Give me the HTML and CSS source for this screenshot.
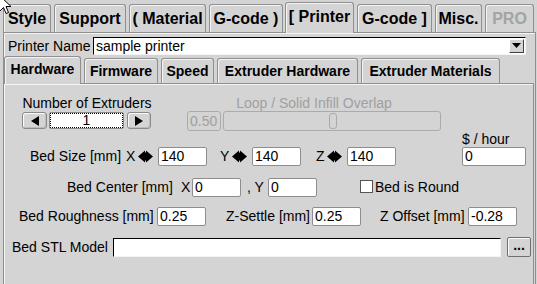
FILE: index.html
```html
<!DOCTYPE html>
<html lang="en">
<head>
    <meta charset="UTF-8">
    <title>Printer settings</title>
    <link rel="stylesheet" href="styles.css">
</head>
<body>
    <svg class="cursor" width="13" height="20" viewBox="0 0 13 20">
        <path d="M0.5 0.5 V16.5 L4.5 12.5 L7 18.5 L9.5 17.5 L7 11.5 H12 Z" fill="#fff" stroke="#000" stroke-width="1"/>
    </svg>

    <div class="tabs">
        <div class="tab tab-style">Style</div>
        <div class="tab tab-support">Support</div>
        <div class="tab tab-material">( Material</div>
        <div class="tab tab-gcode1">G-code )</div>
        <div class="tab tab-printer sel">[ Printer</div>
        <div class="tab tab-gcode2">G-code ]</div>
        <div class="tab tab-misc">Misc.</div>
        <div class="tab tab-pro off">PRO</div>
    </div>

    <div class="panel">
        <div class="name-row">
            <span class="name-label">Printer Name</span>
            <div class="combo">
                <span>sample printer</span>
                <span class="drop">
                    <svg width="9" height="6" viewBox="0 0 9 6"><path d="M0 0 H9 L4.5 5 Z" fill="#000"/></svg>
                </span>
            </div>
        </div>

        <div class="subtabs">
            <div class="subtab st-hardware sel">Hardware</div>
            <div class="subtab st-firmware">Firmware</div>
            <div class="subtab st-speed">Speed</div>
            <div class="subtab st-exthw">Extruder Hardware</div>
            <div class="subtab st-extmat">Extruder Materials</div>
        </div>

        <div class="inner">
            <div class="row r1">
                <div class="ext">
                    <div class="cap">Number of Extruders</div>
                    <div class="spin">
                        <div class="sbtn"><svg width="8" height="10" viewBox="0 0 8 10"><path d="M8 0 V10 L0 5 Z" fill="#000"/></svg></div>
                        <div class="spinval">1</div>
                        <div class="sbtn sbtn-r"><svg width="8" height="10" viewBox="0 0 8 10"><path d="M0 0 V10 L8 5 Z" fill="#000"/></svg></div>
                    </div>
                </div>
                <div class="overlap">
                    <div class="cap dim">Loop / Solid Infill Overlap</div>
                    <div class="slide">
                        <div class="val">0.50</div>
                        <div class="trough"><div class="thumb"></div></div>
                    </div>
                </div>
            </div>

            <div class="row r2">
                <span class="lbl l-bedsize">Bed Size [mm]</span>
                <span class="lbl l-x">X</span>
                <svg class="arr" width="15" height="13" viewBox="0 0 15 13"><path d="M0 6.5 L7 0.5 V12.5 Z M8 0.5 L15 6.5 L8 12.5 Z M6.5 2.5 H8.5 V10.5 H6.5 Z" fill="#000"/></svg>
                <div class="ent">140</div>
                <span class="lbl l-y">Y</span>
                <svg class="arr" width="15" height="13" viewBox="0 0 15 13"><path d="M0 6.5 L7 0.5 V12.5 Z M8 0.5 L15 6.5 L8 12.5 Z M6.5 2.5 H8.5 V10.5 H6.5 Z" fill="#000"/></svg>
                <div class="ent">140</div>
                <span class="lbl l-z">Z</span>
                <svg class="arr" width="15" height="13" viewBox="0 0 15 13"><path d="M0 6.5 L7 0.5 V12.5 Z M8 0.5 L15 6.5 L8 12.5 Z M6.5 2.5 H8.5 V10.5 H6.5 Z" fill="#000"/></svg>
                <div class="ent">140</div>
                <div class="cost">
                    <span class="cap">$ / hour</span>
                    <div class="ent e-cost">0</div>
                </div>
            </div>

            <div class="row r3">
                <span class="lbl l-center">Bed Center [mm]</span>
                <span class="lbl l-cx">X</span>
                <div class="ent">0</div>
                <span class="lbl l-cy">, Y</span>
                <div class="ent">0</div>
                <span class="chk"></span>
                <span class="lbl l-round">Bed is Round</span>
            </div>

            <div class="row r4">
                <span class="lbl l-rough">Bed Roughness [mm]</span>
                <div class="ent">0.25</div>
                <span class="lbl l-settle">Z-Settle [mm]</span>
                <div class="ent">0.25</div>
                <span class="lbl l-offset">Z Offset [mm]</span>
                <div class="ent">-0.28</div>
            </div>

            <div class="row r5">
                <span class="lbl l-stl">Bed STL Model</span>
                <div class="stl"></div>
                <div class="dots">...</div>
            </div>
        </div>
    </div>
</body>
</html>
```

FILE: styles.css
```css
* {
    box-sizing: border-box;
}

body {
    margin: 0;
    width: 537px;
    height: 284px;
    overflow: hidden;
    position: relative;
    background: #d4d4d4;
    font-family: "Liberation Sans", Arial, sans-serif;
    font-size: 14px;
    color: #000;
}

.cursor {
    position: absolute; /* mouse pointer over the tabs */
    left: -1px;
    top: -5px;
    z-index: 10;
}

/* top tabs */
.tabs {
    display: flex;
    align-items: flex-end;
    height: 32px;
    padding-left: 3px;
    gap: 3px;
}

.tab {
    height: 28px;
    border: 1px solid #8f8f8f;
    border-bottom: 0;
    border-radius: 3px 3px 0 0;
    box-shadow: inset 1px 1px 0 #f4f4f4;
    font-weight: bold;
    font-size: 16px;
    line-height: 27px;
    text-align: center;
    white-space: nowrap;
}

.tab.sel {
    height: 31px;
    margin-bottom: -1px;
    margin-left: -1px;
    background: #d4d4d4;
    position: relative;
    z-index: 1;
}

.tab.off {
    color: #a3a3a3;
}

.tab-style { width: 48px; }
.tab-support { width: 72px; }
.tab-material { width: 77px; }
.tab-gcode1 { width: 74px; }
.tab-printer { width: 69px; }
.tab-gcode2 { width: 75px; }
.tab-misc { width: 47px; }
.tab-pro { width: 49px; }

/* outer panel */
.panel {
    margin-left: 3px;
    width: 533px;
    height: 260px;
    border: 1px solid #8f8f8f;
    border-bottom: 0;
    box-shadow: inset 1px 1px 0 #f4f4f4;
    padding-top: 4px;
}

.name-row {
    display: flex;
    align-items: center;
    height: 18px;
    padding-left: 4px;
}

.name-label {
    width: 85px;
}

.combo {
    width: 433px;
    height: 18px;
    display: flex;
    justify-content: space-between;
    align-items: center;
    background: #fff;
    border: 1px solid;
    border-color: #000 #f4f4f4 #f4f4f4 #000;
    padding-left: 2px;
    line-height: 16px;
}

.drop {
    width: 15px;
    height: 14px;
    margin-right: 1px;
    display: flex;
    align-items: center;
    justify-content: center;
    background: #d4d4d4;
    border: 1px solid;
    border-color: #fff #404040 #404040 #fff;
}

/* sub tabs */
.subtabs {
    display: flex;
    align-items: flex-end;
    height: 28px;
    gap: 3px;
}

.subtab {
    height: 25px;
    border: 1px solid #8f8f8f;
    border-bottom: 0;
    border-radius: 3px 3px 0 0;
    box-shadow: inset 1px 1px 0 #f4f4f4;
    font-weight: bold;
    line-height: 24px;
    text-align: center;
    white-space: nowrap;
}

.subtab.sel {
    height: 28px;
    margin-bottom: -1px;
    background: #d4d4d4;
    position: relative;
    z-index: 1;
}

.st-hardware { width: 77px; }
.st-firmware { width: 74px; }
.st-speed { width: 53px; }
.st-exthw { width: 141px; }
.st-extmat { width: 139px; }

/* inner panel */
.inner {
    height: 210px;
    margin-right: 1px;
    border-top: 1px solid #8f8f8f;
    border-right: 1px solid #8f8f8f;
    box-shadow: inset 0 1px 0 #f4f4f4;
    padding-top: 11px;
}

.row {
    display: flex;
}

.cap {
    height: 16px;
    line-height: 16px;
    white-space: nowrap;
}

.dim {
    color: #a0a0a0;
}

.r1 {
    align-items: flex-start;
}

.ext {
    margin-left: 18px;
    width: 130px;
    display: flex;
    flex-direction: column;
    align-items: center;
}

.spin {
    display: flex;
    margin-top: 1px;
    width: 130px;
}

.sbtn {
    width: 25px;
    height: 17px;
    display: flex;
    align-items: center;
    justify-content: center;
    border: 1px solid #8a8a8a;
    border-radius: 3px;
    box-shadow: inset 1px 1px 0 #fbfbfb, inset -1px -1px 0 #bcbcbc;
}

.sbtn-r {
    width: 24px;
}

.spinval {
    width: 75px;
    height: 17px;
    margin: 0 3px 0 2px;
    background: #fff;
    border: 1px solid #8a8a8a;
    border-radius: 2px;
    outline: 1px dotted #000;
    outline-offset: -2px;
    text-align: center;
    line-height: 15px;
}

.overlap {
    margin-left: 35px;
    width: 254px;
    display: flex;
    flex-direction: column;
    align-items: center;
}

.slide {
    display: flex;
    gap: 2px;
    width: 254px;
    height: 20px;
}

.val {
    width: 34px;
    border: 1px solid #ababab;
    border-radius: 3px;
    color: #a0a0a0;
    line-height: 18px;
    padding-left: 2px;
}

.trough {
    flex: 1;
    display: flex;
    align-items: center;
    padding-left: 105px;
    border: 1px solid #ababab;
    border-radius: 3px;
}

.thumb {
    width: 8px;
    height: 16px;
    border: 1px solid #ababab;
    border-radius: 3px;
}

/* form rows: label boxes have fixed widths so the fields line up */
.lbl {
    height: 19px;
    line-height: 19px;
    white-space: nowrap;
    flex-shrink: 0;
}

.ent {
    width: 49px;
    height: 19px;
    flex-shrink: 0;
    background: #fff;
    border: 1px solid #8d8d8d;
    border-radius: 2px;
    padding-left: 2px;
    line-height: 17px;
}

.arr {
    margin: 0 5px 3px 0;
    flex-shrink: 0;
}

.r2 {
    align-items: flex-end;
}

.l-bedsize { margin-left: 26px; width: 96px; }
.l-x { width: 12px; }
.l-y { margin-left: 13px; width: 12px; }
.l-z { margin-left: 15px; width: 11px; }

.cost {
    margin-left: 66px;
    display: flex;
    flex-direction: column;
}

.e-cost {
    width: 64px;
}

.r3 {
    margin-top: 12px;
    align-items: flex-end;
}

.l-center { margin-left: 63px; width: 114px; }
.l-cx { width: 11px; }
.l-cy { margin-left: 6px; width: 21px; }

.chk {
    width: 13px;
    height: 13px;
    margin: 0 0 4px 43px;
    background: #fff;
    border: 1px solid #555;
}

.l-round { margin-left: 2px; }

.r4 {
    margin-top: 10px;
    align-items: flex-end;
}

.l-rough { margin-left: 15px; width: 138px; }
.l-settle { margin-left: 20px; width: 86px; }
.l-offset { margin-left: 19px; width: 88px; }

.r5 {
    margin-top: 11px;
    align-items: center;
}

.l-stl { margin-left: 8px; width: 101px; }

.stl {
    width: 388px;
    height: 19px;
    background: #fff;
    border: 1px solid;
    border-color: #000 #f4f4f4 #f4f4f4 #000;
}

.dots {
    width: 24px;
    height: 20px;
    margin-left: 6px;
    border: 1px solid #6f6f6f;
    border-radius: 2px;
    box-shadow: inset 1px 1px 0 #fbfbfb;
    font-weight: bold;
    text-align: center;
    line-height: 15px;
}
```
